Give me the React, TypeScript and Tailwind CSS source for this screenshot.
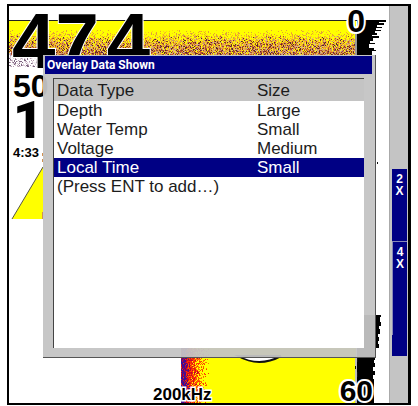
const rows = [
  { type: "Depth", size: "Large" },
  { type: "Water Temp", size: "Small" },
  { type: "Voltage", size: "Medium" },
  { type: "Local Time", size: "Small", selected: true },
  { type: "(Press ENT to add…)", size: "" },
]

// Small seeded generator so the echo speckle is the same on every render
function createRandom(seed: number) {
  let s = seed
  return () => {
    s = (s * 1664525 + 1013904223) % 4294967296
    return s / 4294967296
  }
}

type Speckle = { color: string; d: string }

function speckle(
  seed: number,
  x0: number,
  y0: number,
  x1: number,
  y1: number,
  colors: string[],
  density: (x: number, y: number) => number,
): Speckle[] {
  const random = createRandom(seed)
  const paths = colors.map((color) => ({ color, d: "" }))
  for (let y = y0; y < y1; y++) {
    for (let x = x0; x < x1; x++) {
      if (random() < density(x, y)) {
        const pick = Math.floor(random() * colors.length)
        paths[pick].d += `M${x} ${y}h${random() < 0.5 ? 2 : 1}v1h-1z`
      } else {
        random()
      }
    }
  }
  return paths
}

const surface = [
  ...speckle(7, 0, 24, 347, 49, ["#ffd21c", "#f5b32a", "#e8a030", "#dba040"], (_, y) => (y - 23) / 16),
  ...speckle(19, 0, 30, 347, 49, ["#8c3a20", "#c4572c", "#5a2430", "#d9b090", "#a04a38", "#c89070"], (_, y) => (y - 28) / 22),
  ...speckle(31, 0, 46, 34, 61, ["#f3eef3", "#b39bb0", "#7d6580", "#ffffff", "#d8c9d4"], () => 0.75),
]

const bottomEdge = [
  ...speckle(43, 178, 340, 200, 397, ["#ff3000", "#ff7a00", "#ff5500"], (x) => 1.3 - (x - 176) / 18),
  ...speckle(59, 172, 340, 192, 397, ["#c8002c", "#e01c10", "#ff3000"], (x) => 1.5 - (x - 172) / 12),
  ...speckle(71, 172, 340, 184, 397, ["#4a0a90", "#5a0a80", "#30109c"], (x) => 1.5 - (x - 172) / 5),
]

function SonarChart() {
  return (
    <svg className="absolute left-0 top-0" width="381" height="398" viewBox="0 0 381 398" shapeRendering="crispEdges" aria-hidden="true">
      {/* surface clutter */}
      <rect x="0" y="15" width="347" height="34" fill="#ffff00" />
      {surface.map((s, i) => (
        <path key={i} d={s.d} fill={s.color} />
      ))}
      <rect x="0" y="14" width="370" height="1" fill="#222" />
      {/* a-scope, top */}
      <path
        d="M348 14H377V16H370V17H375V19H368V21H373V22H367V24H372V25H366V27H368V29H363V30H370V32H364V35H361V37H366V38H360V42H365V44H367V45H363V49H348Z"
        fill="#000"
      />
      <path d="M347 22v27" stroke="#999" strokeWidth="2" />
      {/* fish arch cut by the menu */}
      <path d="M3 213L34 161V213Z" fill="#ffff00" shapeRendering="auto" />
      <path d="M3 213L34 161" stroke="#554" strokeWidth="1" shapeRendering="auto" />
      <path d="M33 147v3M33 153v3M33 206v7" stroke="#d09050" />
      {/* bottom echo */}
      <rect x="172" y="309" width="175" height="89" fill="#ffff00" />
      <rect x="172" y="340" width="10" height="58" fill="#c8101c" />
      {bottomEdge.map((s, i) => (
        <path key={i} d={s.d} fill={s.color} />
      ))}
      <path d="M229 350Q250 362 272 350Z" fill="#fff" stroke="#111" strokeWidth="2" shapeRendering="auto" />
      {/* a-scope, bottom */}
      <path
        d="M348 309H372V311H371V316H372V320H370V323H371V328H369V331H370V335H369V338H370V342H367V351H366V354H365V357H366V361H364V365H366V369H364V373H365V398H348Z"
        fill="#000"
      />
      <path d="M347 351v47" stroke="#bbb" strokeWidth="2" />
      <path d="M348 352v4M346 360v3M348 366v5" stroke="#111" />
      <path d="M368 156v2" stroke="#111" />
    </svg>
  )
}

function Overlay() {
  return (
    <div className="font-bold leading-none text-black">
      <div className="absolute left-[3px] top-[-4px] flex gap-2 text-[78px] [paint-order:stroke_fill] [-webkit-text-stroke:2px_white]">
        <span>47</span>
        <span>4</span>
      </div>
      <div className="absolute left-1 top-16 text-[32px]">50</div>
      <div className="absolute left-1 top-[89px] font-[Roboto,sans-serif] text-[52px] font-black">1</div>
      <div className="absolute left-1 top-[140px] text-[13px]">4:33</div>
      <div className="absolute right-6 top-[-1px] text-[32px] [paint-order:stroke_fill] [-webkit-text-stroke:4px_white]">
        0
      </div>
      <div className="absolute bottom-0 left-36 text-[17px] [paint-order:stroke_fill] [-webkit-text-stroke:3px_white]">
        200kHz
      </div>
      <div className="absolute bottom-[-3px] right-4 text-[30px] [paint-order:stroke_fill] [-webkit-text-stroke:4px_white]">
        60
      </div>
    </div>
  )
}

function OverlayDataMenu() {
  return (
    <section
      aria-labelledby="menu-title"
      className="absolute bottom-[45px] left-[34px] right-[13px] top-[49px] flex flex-col border-b border-r border-b-[#555] border-r-[#555] bg-[#c4c4c4]/95 pl-0.5"
    >
      <h1
        id="menu-title"
        className="mr-[3px] mt-px h-[18px] bg-[#000084] pl-0.5 font-[Roboto,sans-serif] text-[12px] font-bold leading-[18px] text-white"
      >
        Overlay Data Shown
      </h1>
      <div className="mb-[9px] ml-2 mr-[11px] mt-1 flex-1 border-l border-t border-[#444] bg-white">
        <table className="w-full table-fixed border-collapse text-left text-[17px] leading-[19px] text-[#1c1c1c]">
          <thead>
            <tr className="bg-[#c4c4c4]">
              <th className="h-[22px] w-[200px] p-0 pl-[3px] font-normal">Data Type</th>
              <th className="h-[22px] p-0 pl-[3px] font-normal">Size</th>
            </tr>
          </thead>
          <tbody>
            {rows.map((row) => (
              <tr key={row.type} className={row.selected ? "bg-[#000084] text-white" : ""}>
                <td className="h-[19px] p-0 pl-[3px]">{row.type}</td>
                <td className="h-[19px] p-0 pl-[3px]">{row.size}</td>
              </tr>
            ))}
          </tbody>
        </table>
      </div>
    </section>
  )
}

function ZoomBar() {
  return (
    <aside className="w-[19px] shrink-0 border-l border-[#aaa] bg-[#c4c4c4] pl-0.5 pr-px pt-[163px] text-center text-[12px] font-bold leading-3 text-white">
      <div className="flex h-[187px] flex-col bg-[#000084]">
        <div className="flex h-[72px] flex-col pt-1">
          <span>2</span>
          <span>X</span>
        </div>
        <div className="flex h-[94px] flex-col border-l border-t border-[#8888b8] pt-1">
          <span>4</span>
          <span>X</span>
        </div>
      </div>
    </aside>
  )
}

export default function App() {
  return (
    <div className="min-h-screen bg-white pb-px pl-[7px] pr-[7px] pt-1 font-['Liberation_Sans',Arial,sans-serif]">
      <main className="flex h-[401px] border-2 border-r-[3px] border-black bg-white">
        <div className="relative min-w-0 flex-1 overflow-hidden">
          <SonarChart />
          <Overlay />
          <OverlayDataMenu />
        </div>
        <ZoomBar />
      </main>
    </div>
  )
}
